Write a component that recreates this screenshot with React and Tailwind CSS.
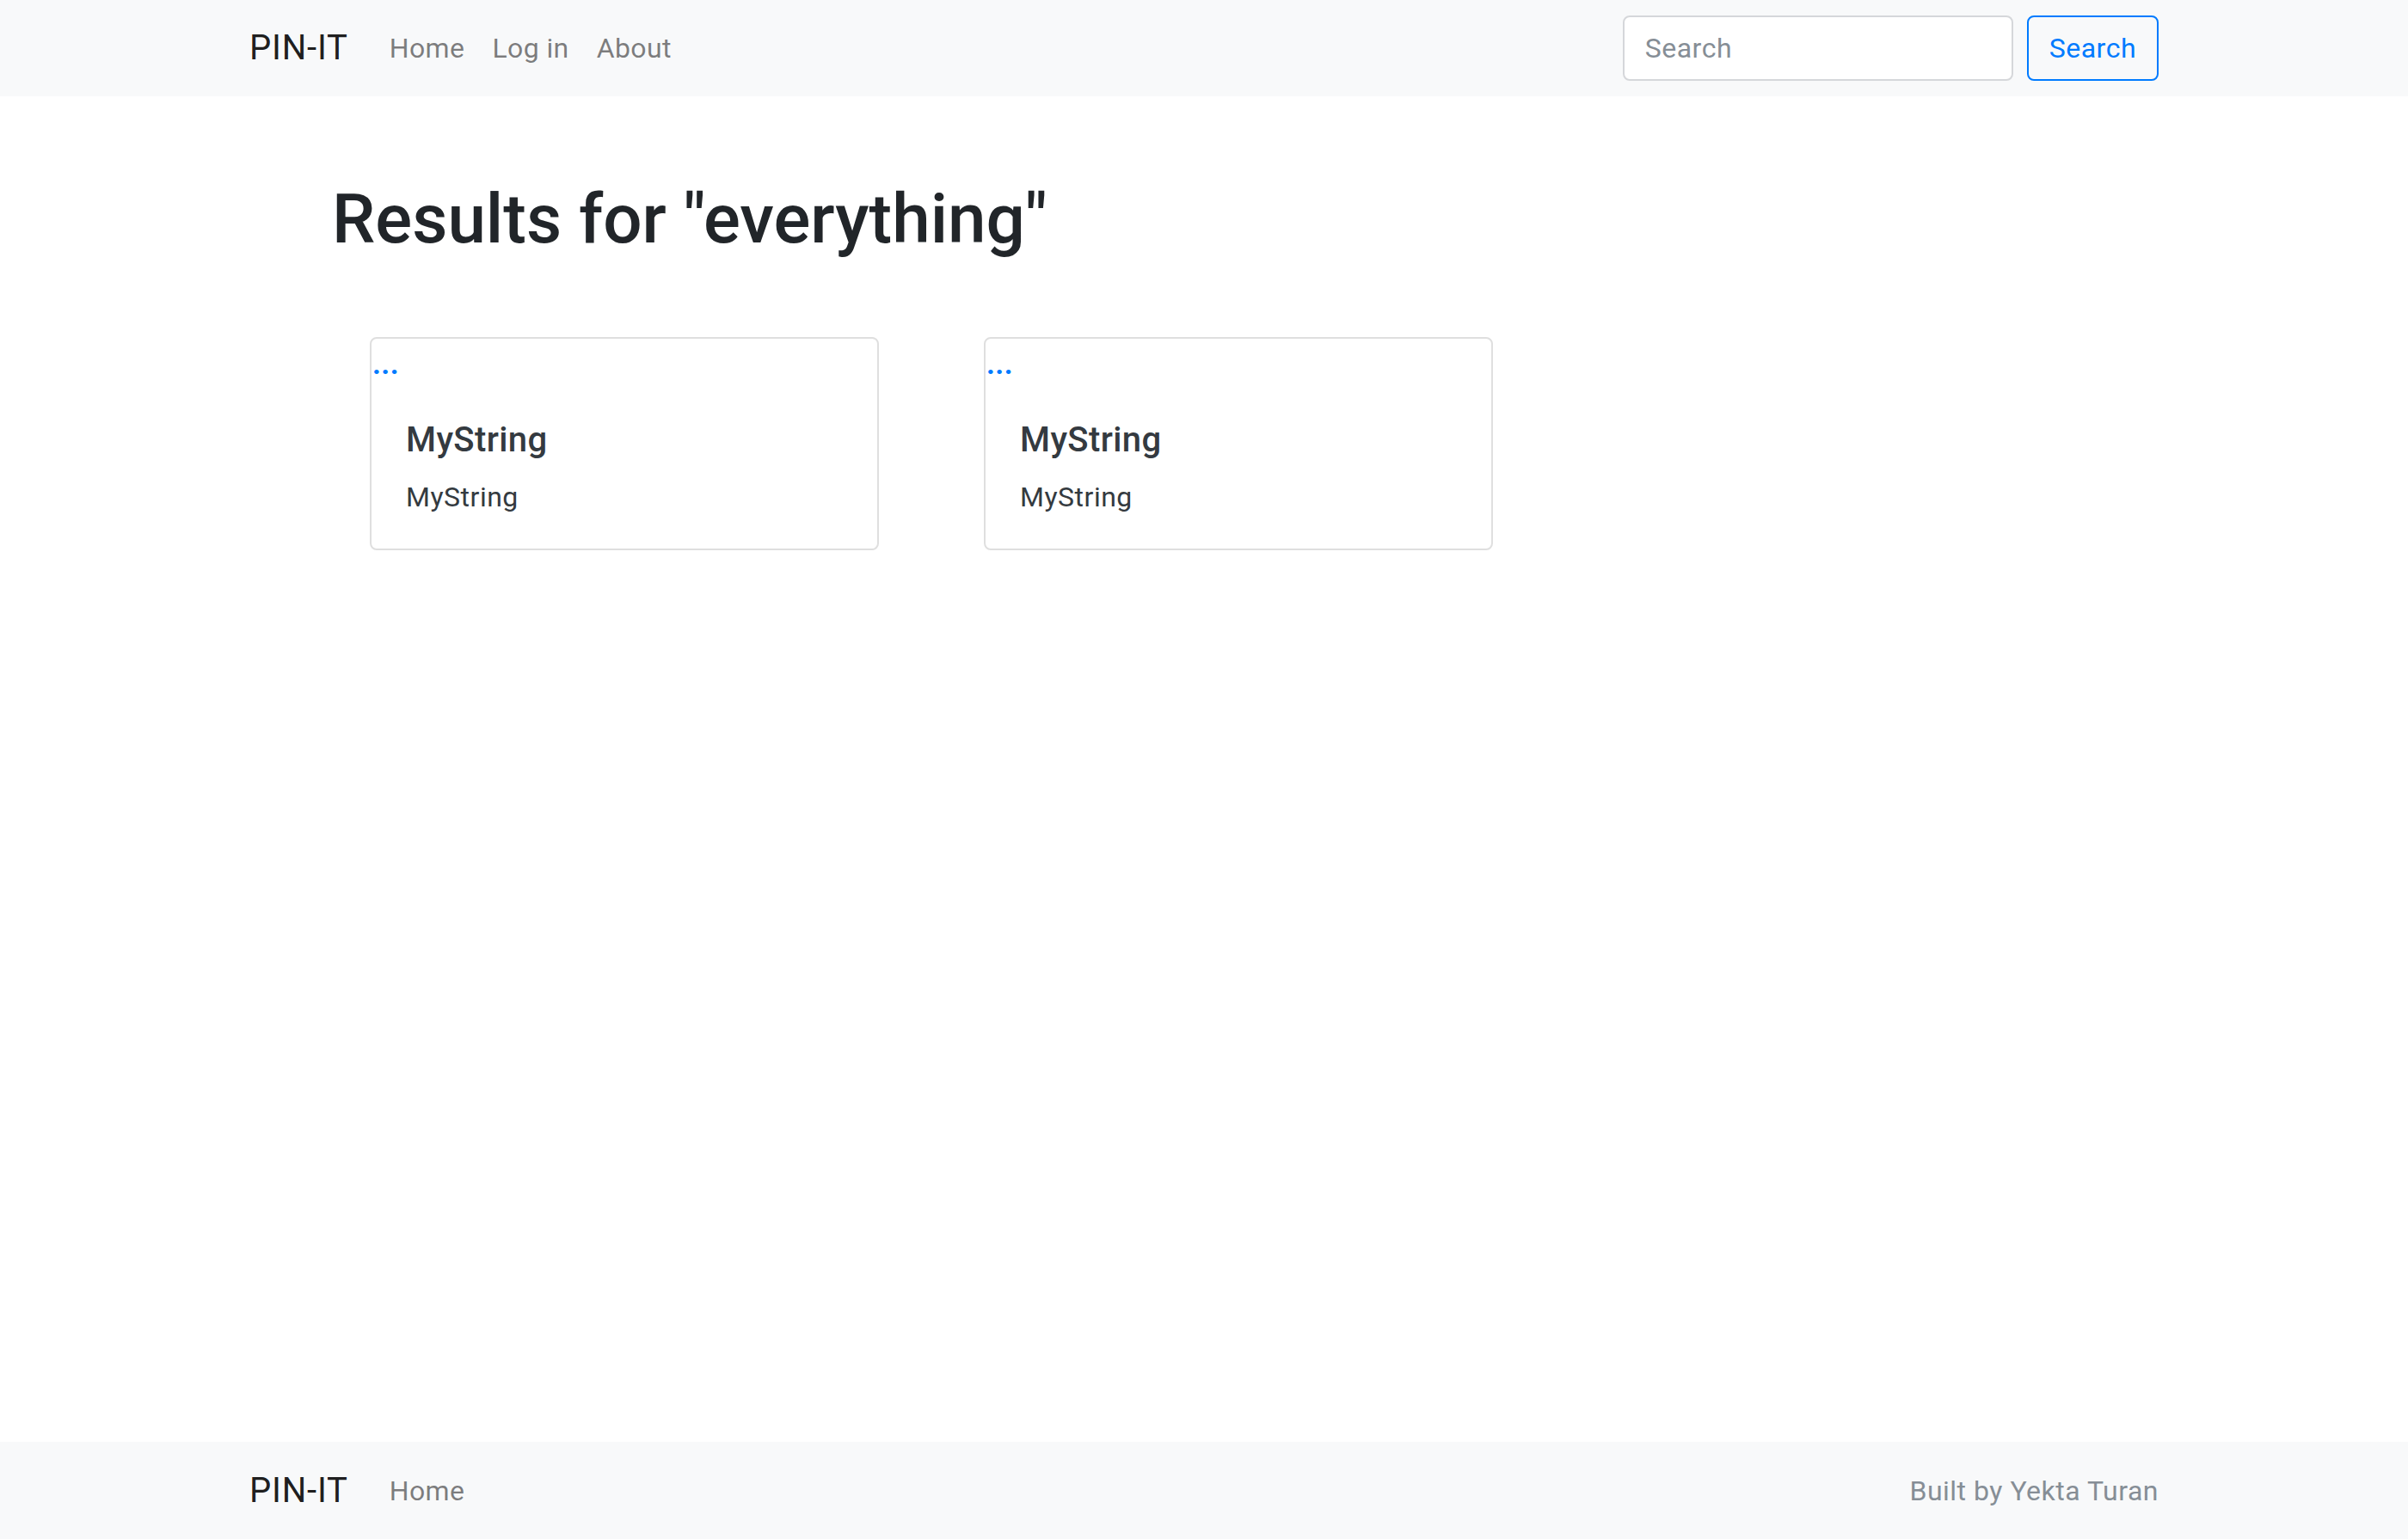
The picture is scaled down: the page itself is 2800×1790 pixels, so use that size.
import React from "react";

function Card() {
  return (
    <div className="w-[592px] h-[248px] border-2 border-[#dfdfdf] rounded-[8px] bg-white flex flex-col">
      <div className="h-[48px] leading-[58px] text-[34px] font-bold text-[#007bff] pl-[1px] tracking-[0.5px]">...</div>
      <div className="px-[40px] pt-[46px]">
        <h5 className="text-[40px] leading-[48px] font-medium text-[#343a40] mb-[18px] tracking-[0.4px]">MyString</h5>
        <p className="text-[32px] leading-[48px] text-[#343a40] tracking-[0.5px]">MyString</p>
      </div>
    </div>
  );
}

export default function App() {
  return (
    <div className="min-h-screen flex flex-col bg-white font-['Roboto','Liberation_Sans',sans-serif]">
      <nav className="bg-[#f8f9fa] h-[112px] flex items-center shrink-0">
        <div className="w-[2280px] mx-auto px-[30px] flex items-center">
          <span className="text-[40px] leading-[60px] text-black/90 mr-[32px] tracking-[0.8px]">PIN-IT</span>
          <a className="px-[16px] text-[32px] text-black/50 tracking-[0.4px]">Home</a>
          <a className="px-[16px] text-[32px] text-black/50 tracking-[0.4px]">Log in</a>
          <a className="px-[16px] text-[32px] text-black/50 tracking-[0.4px]">About</a>
          <div className="ml-auto flex items-center">
            <input
              placeholder="Search"
              className="w-[454px] h-[76px] bg-white border-2 border-[#d5d7da] rounded-[8px] px-[24px] text-[32px] tracking-[0.5px] text-[#495057] placeholder:text-[#868e96] outline-none"
            />
            <button className="ml-[16px] h-[76px] px-[24px] border-2 border-[#007bff] text-[#007bff] rounded-[8px] text-[32px] tracking-[0.5px] bg-transparent">
              Search
            </button>
          </div>
        </div>
      </nav>

      <main className="flex-1">
        <div className="w-[2280px] mx-auto px-[30px]">
          <div className="mx-[96px] mt-[95px]">
            <h1 className="text-[80px] leading-[96px] font-medium text-[#212529]">Results for "everything"</h1>
            <div className="flex gap-[122px] pl-[44px] mt-[89px]">
              <Card />
              <Card />
            </div>
          </div>
        </div>
      </main>

      <footer className="bg-[#f8f9fa] h-[113px] flex items-center shrink-0">
        <div className="w-[2280px] mx-auto px-[30px] flex items-center">
          <span className="text-[40px] leading-[60px] text-black/90 mr-[32px] tracking-[0.8px]">PIN-IT</span>
          <a className="px-[16px] text-[32px] text-black/50 tracking-[0.4px]">Home</a>
          <span className="ml-auto text-[32px] text-[#868e96] tracking-[0.5px]">Built by Yekta Turan</span>
        </div>
      </footer>
    </div>
  );
}
